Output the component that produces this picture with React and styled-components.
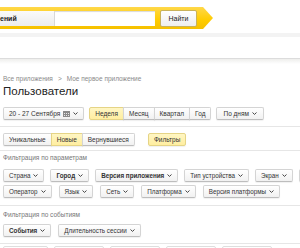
import React from 'react'
import styled, { createGlobalStyle, css } from 'styled-components'

const GlobalStyle = createGlobalStyle`
  html, body {
    margin: 0;
    padding: 0;
    background: #fff;
    overflow: hidden;
  }
  body {
    font-family: "Liberation Sans", Arial, sans-serif;
    color: #333;
  }
  * {
    box-sizing: border-box;
  }
`

const Page = styled.div`
  width: 300px;
  height: 248px;
  overflow: hidden;
`

const Header = styled.div`
  height: 33px;
  padding-top: 7px;
`

const SearchArrow = styled.div`
  width: 213px;
  height: 22px;
  display: flex;
  align-items: center;
  background: linear-gradient(#ffd84a, #ffcc00 60%, #f5c000);
  clip-path: polygon(0 0, 203px 0, 213px 11px, 203px 22px, 0 22px);
`

const SearchField = styled.div`
  width: 155px;
  height: 15px;
  display: flex;
  background: #fff;
  box-shadow: inset 0 1px 1px rgba(0, 0, 0, 0.15);
`

const Scope = styled.div`
  width: 55px;
  display: flex;
  align-items: center;
  background: linear-gradient(#fafafa, #ececec);
  border-right: 1px solid #d8d8d8;
  font-size: 7px;
  font-weight: bold;
  color: #222;
`

const SearchButton = styled.button`
  margin-left: 5px;
  width: 37px;
  height: 17px;
  padding: 0;
  font-family: inherit;
  font-size: 7px;
  color: #222;
  background: linear-gradient(#fff, #eee);
  border: 1px solid #c9b25a;
  border-radius: 2px;
`

const TopStrip = styled.div`
  height: 4px;
  background: #f3f3f3;
`

const MenuArea = styled.div`
  height: 21px;
`

const Shade = styled.div`
  height: 6px;
  border-top: 1px solid #dcdcdc;
  background: linear-gradient(#eeeeec, #fff);
`

const Content = styled.div`
  padding: 0 3px;
`

const Crumbs = styled.div`
  margin-top: 11px;
  font-size: 6.5px;
  line-height: 8px;
  color: #8a8a8a;
  span {
    margin: 0 5px;
  }
`

const Title = styled.h1`
  margin: 1px 0 0;
  font-size: 11.5px;
  line-height: 15px;
  font-weight: normal;
  color: #222;
`

const Row = styled.div`
  display: flex;
  align-items: center;
  gap: ${p => p.$gap || 5}px;
  margin-top: ${p => p.$top || 0}px;
`

const Group = styled.div`
  display: flex;
`

const buttonBase = css`
  height: 13px;
  flex: none;
  display: inline-flex;
  align-items: center;
  gap: 3px;
  padding: 0 ${p => p.$pad || 5}px;
  font-family: inherit;
  font-size: ${p => p.$size || 6.5}px;
  white-space: nowrap;
  color: #333;
  font-weight: ${p => (p.$bold ? 'bold' : 'normal')};
  border: 1px solid #d4d4d4;
  border-bottom-color: #bdbdbd;
  border-radius: 2px;
  background: linear-gradient(#fff, #f1f1f1);
  box-shadow: 0 1px 1px rgba(0, 0, 0, 0.06);
  ${p =>
    p.$on &&
    css`
      background: linear-gradient(#fff6c4, #ffeea0);
      border-color: #e5d486;
    `}
`

const Button = styled.div`
  ${buttonBase}
`

const Segment = styled.div`
  ${buttonBase}
  border-radius: 0;
  margin-left: -1px;
  &:first-child {
    margin-left: 0;
    border-radius: 2px 0 0 2px;
  }
  &:last-child {
    border-radius: 0 2px 2px 0;
  }
`

const Line = styled.div`
  height: 1px;
  margin: ${p => p.$m || '4px -3px 0'};
  background: #e6e6e6;
`

const Label = styled.div`
  margin-top: ${p => p.$top || 3}px;
  font-size: 6.5px;
  line-height: 8px;
  color: #777;
`

const BottomBox = styled.div`
  width: ${p => p.$w}px;
  height: 10px;
  flex: none;
  border: 1px solid #dedede;
  border-radius: 2px;
  background: linear-gradient(#fff, #f6f6f6);
`

const Chevron = () => (
  <svg width="5" height="3" viewBox="0 0 5 3">
    <path d="M0.5 0.5 L2.5 2.4 L4.5 0.5" fill="none" stroke="#444" strokeWidth="1" />
  </svg>
)

const CalendarIcon = () => (
  <svg width="7" height="6" viewBox="0 0 7 6">
    <rect x="0" y="0" width="7" height="6" fill="#8a8a8a" />
    <g fill="#e8e8e8">
      <rect x="1" y="2" width="1" height="1" />
      <rect x="3" y="2" width="1" height="1" />
      <rect x="5" y="2" width="1" height="1" />
      <rect x="1" y="4" width="1" height="1" />
      <rect x="3" y="4" width="1" height="1" />
      <rect x="5" y="4" width="1" height="1" />
    </g>
  </svg>
)

const Drop = ({ children, bold }) => (
  <Button $bold={bold} $pad={5} $size={6.3}>
    {children}
    <Chevron />
  </Button>
)

export default function App() {
  return (
    <Page>
      <GlobalStyle />
      <Header>
        <SearchArrow>
          <SearchField>
            <Scope>ений</Scope>
          </SearchField>
          <SearchButton>Найти</SearchButton>
        </SearchArrow>
      </Header>
      <TopStrip />
      <MenuArea />
      <Shade />
      <Content>
        <Crumbs>
          Все приложения<span>&gt;</span>Мое первое приложение
        </Crumbs>
        <Title>Пользователи</Title>

        <Row $top={8} $gap={5}>
          <Button $pad={5}>
            20 - 27 Сентября
            <CalendarIcon />
            <Chevron />
          </Button>
          <Group>
            <Segment $on>Неделя</Segment>
            <Segment>Месяц</Segment>
            <Segment>Квартал</Segment>
            <Segment>Год</Segment>
          </Group>
          <Button $pad={6}>
            По дням
            <Chevron />
          </Button>
        </Row>
        <Line $m="6px -3px 0" />

        <Row $top={6} $gap={13}>
          <Group>
            <Segment>Уникальные</Segment>
            <Segment $on>Новые</Segment>
            <Segment>Вернувшиеся</Segment>
          </Group>
          <Button $on $pad={5}>Фильтры</Button>
        </Row>
        <Line />

        <Label>Фильтрация по параметрам</Label>
        <Row $top={7} $gap={6}>
          <Drop>Страна</Drop>
          <Drop bold>Город</Drop>
          <Drop bold>Версия приложения</Drop>
          <Drop>Тип устройства</Drop>
          <Drop>Экран</Drop>
          <Drop>Устройство</Drop>
        </Row>
        <Row $top={3} $gap={7}>
          <Drop>Оператор</Drop>
          <Drop>Язык</Drop>
          <Drop>Сеть</Drop>
          <Drop>Платформа</Drop>
          <Drop>Версия платформы</Drop>
        </Row>
        <Line $m="7px -3px 0" />

        <Label $top={5}>Фильтрация по событиям</Label>
        <Row $top={5} $gap={7}>
          <Drop bold>События</Drop>
          <Drop>Длительность сессии</Drop>
        </Row>
        <Line $m="6px -3px 0" />
        <Row $top={2} $gap={6}>
          <BottomBox $w={45} />
          <BottomBox $w={50} />
          <BottomBox $w={50} />
          <BottomBox $w={50} />
          <BottomBox $w={50} />
        </Row>
      </Content>
    </Page>
  )
}
